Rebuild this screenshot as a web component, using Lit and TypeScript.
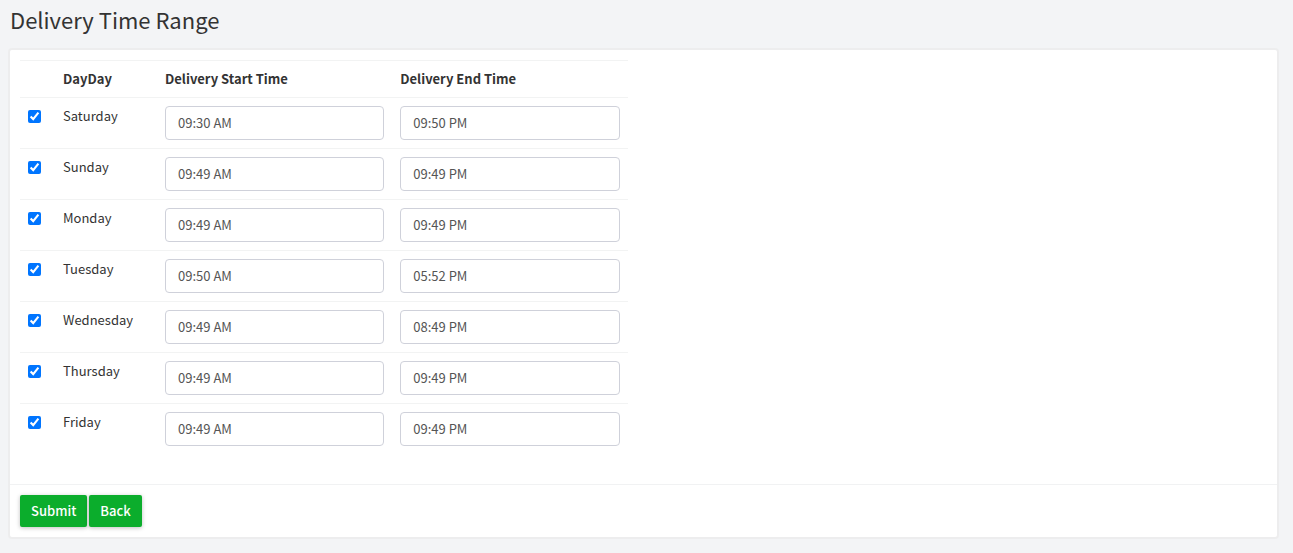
import { LitElement, html, css } from "lit";
import { customElement, state } from "lit/decorators.js";

interface DeliveryDay {
  name: string;
  start: string;
  end: string;
  enabled: boolean;
}

@customElement("app-root")
export class AppRoot extends LitElement {
  static styles = css`
    :host {
      display: block;
      box-sizing: border-box;
      min-height: 100vh;
      padding: 6px 16px 16px 10px;
      background: #f3f4f6;
      color: #333;
      font-family: "Noto Sans CJK JP", "Noto Sans", sans-serif;
      font-size: 13px;
      line-height: 20px;
    }
    * {
      box-sizing: border-box;
    }
    .title {
      margin: 0 0 18px;
      font-size: 22px;
      font-weight: 400;
      line-height: 26px;
    }
    .card {
      background: #fff;
      border-radius: 2px;
      box-shadow: 0 0 0 2px #ededee;
    }
    .body {
      padding: 10px 10px 30px;
    }
    .days {
      width: calc(50% - 16px);
      border-collapse: separate;
      border-spacing: 0;
      table-layout: fixed;
    }
    .days th,
    .days td {
      padding: 8px;
      border-top: 1px solid #f2f3f3;
      text-align: left;
      vertical-align: top;
    }
    .days th {
      font-weight: 700;
    }
    .check-col {
      width: 35px;
    }
    .day-col {
      width: 102px;
    }
    .check {
      display: block;
      width: 13px;
      height: 13px;
      margin: 4px 0 0;
    }
    .time {
      display: block;
      width: 100%;
      height: 34px;
      padding: 5px 12px 7px;
      border: 1px solid #cfd1da;
      border-radius: 4px;
      background: #fff;
      color: #555;
      font: inherit;
    }
    .footer {
      display: flex;
      gap: 2px;
      padding: 10px;
      border-top: 1px solid #f1f2f3;
    }
    .btn {
      height: 32px;
      padding: 0 11px;
      border: 0;
      border-radius: 2px;
      background: #0bad2c;
      box-shadow: 0 1px 4px rgba(0, 0, 0, 0.25);
      color: #fff;
      font: inherit;
      font-weight: 500;
      cursor: pointer;
    }
  `;

  @state()
  private days: DeliveryDay[] = [
    { name: "Saturday", start: "09:30 AM", end: "09:50 PM", enabled: true },
    { name: "Sunday", start: "09:49 AM", end: "09:49 PM", enabled: true },
    { name: "Monday", start: "09:49 AM", end: "09:49 PM", enabled: true },
    { name: "Tuesday", start: "09:50 AM", end: "05:52 PM", enabled: true },
    { name: "Wednesday", start: "09:49 AM", end: "08:49 PM", enabled: true },
    { name: "Thursday", start: "09:49 AM", end: "09:49 PM", enabled: true },
    { name: "Friday", start: "09:49 AM", end: "09:49 PM", enabled: true },
  ];

  private renderDay(day: DeliveryDay) {
    const id = day.name.toLowerCase();
    return html`
      <tr>
        <td><input class="check" type="checkbox" id=${id} .checked=${day.enabled} /></td>
        <td><label id="${id}-label" for=${id}>${day.name}</label></td>
        <td><input class="time" type="text" aria-labelledby="${id}-label start-head" .value=${day.start} /></td>
        <td><input class="time" type="text" aria-labelledby="${id}-label end-head" .value=${day.end} /></td>
      </tr>
    `;
  }

  render() {
    return html`
      <h1 class="title">Delivery Time Range</h1>
      <form class="card" @submit=${(e: Event) => e.preventDefault()}>
        <div class="body">
          <table class="days">
            <thead>
              <tr>
                <th class="check-col"></th>
                <th class="day-col">DayDay</th>
                <th id="start-head">Delivery Start Time</th>
                <th id="end-head">Delivery End Time</th>
              </tr>
            </thead>
            <tbody>
              ${this.days.map((day) => this.renderDay(day))}
            </tbody>
          </table>
        </div>
        <div class="footer">
          <button class="btn" type="submit">Submit</button>
          <button class="btn" type="button">Back</button>
        </div>
      </form>
    `;
  }
}
